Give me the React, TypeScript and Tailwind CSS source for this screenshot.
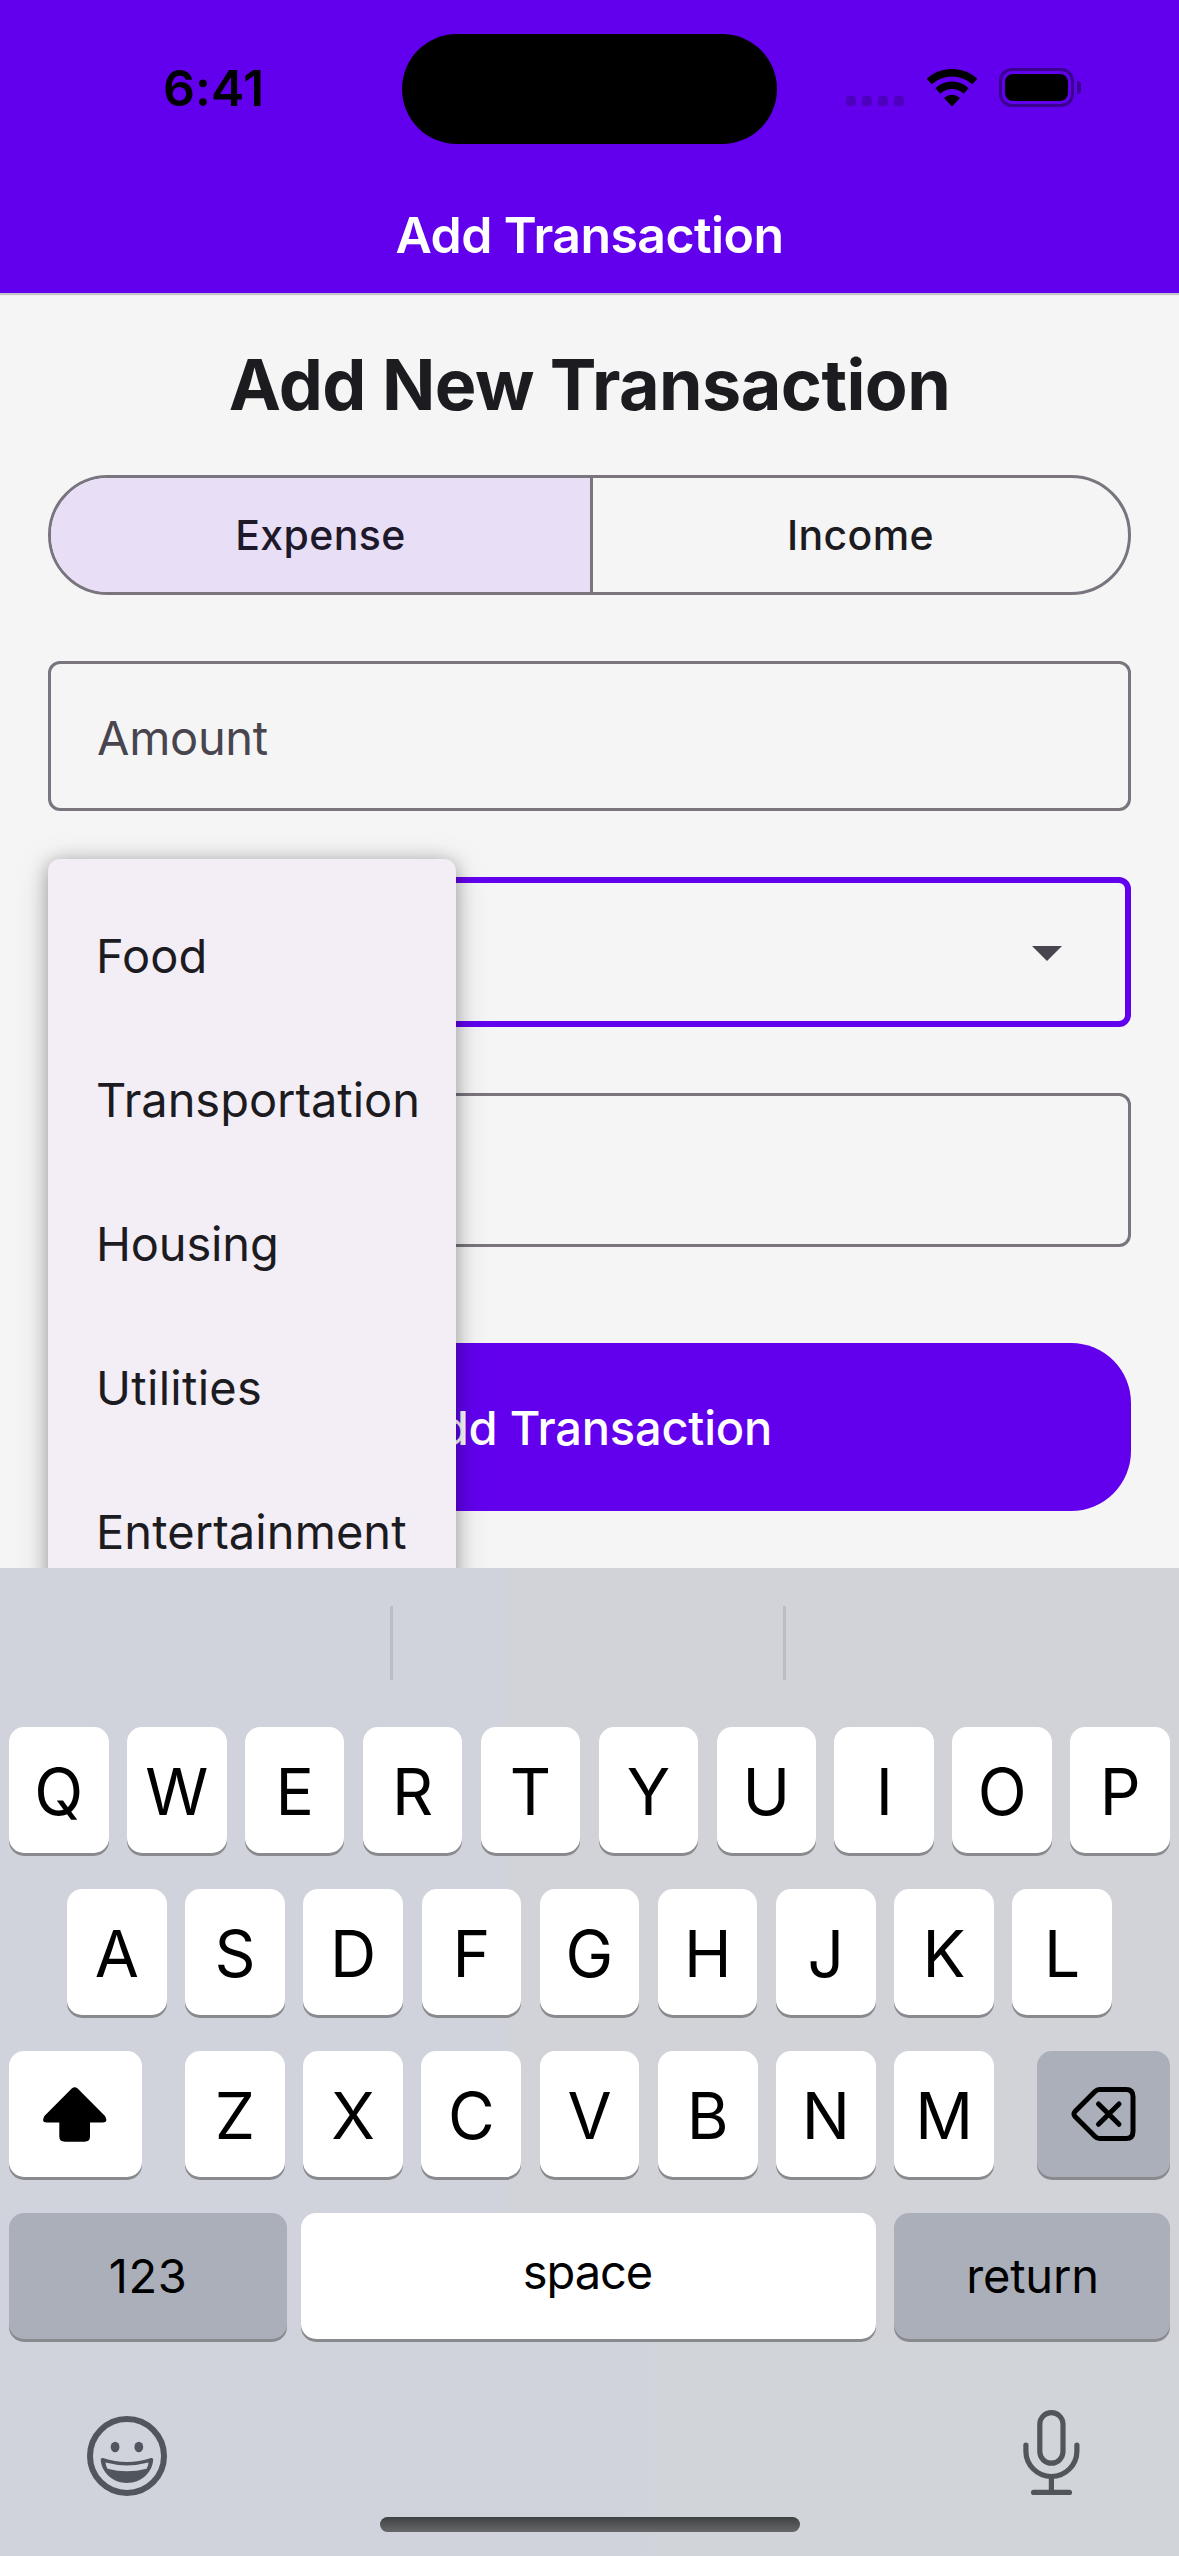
import type { ReactNode } from "react";

const CATEGORIES = [
  { label: "Food", tracking: "tracking-[0.1px]" },
  { label: "Transportation", tracking: "tracking-[-0.04px]" },
  { label: "Housing", tracking: "tracking-[-0.15px]" },
  { label: "Utilities", tracking: "tracking-[0.3px]" },
  { label: "Entertainment", tracking: "tracking-[0.08px]" },
];

function WifiIcon() {
  return (
    <svg width="50" height="38" viewBox="0 0 50 38" fill="none" stroke="#000" strokeWidth="7.5">
      <path d="M2.3 12.6A33.3 33.3 0 0 1 47.7 12.6" />
      <path d="M10.9 21.9A20.7 20.7 0 0 1 39.1 21.9" />
      <path d="M25 36.5L18 29A10.8 10.8 0 0 1 32 29Z" fill="#000" strokeWidth="1.4" strokeLinejoin="round" />
    </svg>
  );
}

function ShiftIcon() {
  return (
    <svg width="64" height="55" viewBox="0 0 64 55" className="mr-[2px] overflow-visible">
      <path d="M29 1.3Q31.7-1 34.4 1.3L62 29Q65.5 35.5 60 35.5H47V49.5Q47 54.7 41.5 54.7H22Q16.3 54.7 16.3 49.5V35.5H3.4Q-2 35.5 1.4 29Z" />
    </svg>
  );
}

function BackspaceIcon() {
  return (
    <svg width="65" height="54" viewBox="0 0 65 54" fill="none" stroke="#000" strokeWidth="5" strokeLinecap="round" strokeLinejoin="round">
      <path d="M28.5 2.5H55Q62 2.5 62 9.5V44.5Q62 51.5 55 51.5H28.5Q26 51.5 24 49.5L4 29.5Q2 27 4 24.5L24 4.5Q26 2.5 28.5 2.5Z" />
      <path d="M27.5 17L48 37.3M48 17L27.5 37.3" />
    </svg>
  );
}

function EmojiIcon() {
  return (
    <svg width="80" height="80" viewBox="0 0 80 80">
      <circle cx="40" cy="40" r="37" fill="none" stroke="#51555e" strokeWidth="6" />
      <ellipse cx="28.1" cy="31" rx="4.4" ry="5.3" fill="#51555e" />
      <ellipse cx="51.8" cy="31" rx="4.4" ry="5.3" fill="#51555e" />
      <path d="M13.7 43.6Q13.7 41.5 16 42Q40 50 64 42Q66.3 41.5 66.2 43.6C65.5 57 54 67 40 67S14.5 57 13.7 43.6Z" fill="#51555e" />
      <path d="M18.5 46.6Q40 52.3 61.5 46.6Q61.3 50 59.5 52.7Q40 57.7 20.5 52.7Q18.8 50 18.5 46.6Z" fill="#d0d3dc" />
    </svg>
  );
}

function MicIcon() {
  return (
    <svg width="57" height="86" viewBox="0 0 57 86" fill="none" stroke="#51565b" strokeWidth="5.2" strokeLinecap="round">
      <rect x="16.8" y="2.6" width="23.2" height="50.6" rx="11.6" />
      <path d="M2.9 35V41A25.5 25.5 0 0 0 53.9 41V35" />
      <path d="M28.4 67V81M10.6 82.4H46.4" />
    </svg>
  );
}

function Key({ children, size, dark }: { children: ReactNode; size: string; dark?: boolean }) {
  return (
    <div
      className={`${size} ${dark ? "bg-[#abafba]" : "bg-white"} flex h-[126px] shrink-0 items-center justify-center rounded-[15px] leading-none text-black shadow-[0_3px_0_#898a8d]`}
    >
      {children}
    </div>
  );
}

function Letters({ row }: { row: string }) {
  return (
    <>
      {row.split("").map((letter) => (
        <Key key={letter} size="w-[99.6px]">
          <span className="pt-[3px] text-[64px]">{letter}</span>
        </Key>
      ))}
    </>
  );
}

function StatusBar() {
  return (
    <div className="flex h-[176px] items-start pt-[33px]">
      <div className="flex h-[109px] w-[402px] items-center pl-[163px] text-[50px] leading-none font-semibold tracking-[0.1px] text-black">
        6:41
      </div>
      <div className="mt-[1px] h-[110px] w-[375px] rounded-full bg-black" />
      <div className="flex h-[111px] pl-[69px]">
        <div className="flex gap-[6px] pt-[63px]">
          {[0, 1, 2, 3].map((dot) => (
            <div key={dot} className="size-[10px] rounded-[3px] bg-black/20" />
          ))}
        </div>
        <div className="pt-[36px] pl-[22.5px]">
          <WifiIcon />
        </div>
        <div className="flex h-[74px] items-end pl-[22.5px]">
          <div className="h-[39px] w-[75px] rounded-[13px] border-[3px] border-black/40 p-[3px]">
            <div className="h-[27px] w-[63px] rounded-[8px] bg-black" />
          </div>
          <div className="mb-[13px] ml-[3px] h-[13px] w-[4px] rounded-r-full bg-black/40" />
        </div>
      </div>
    </div>
  );
}

function CategoryMenu() {
  return (
    <div className="absolute top-[566px] left-[48px] h-[900px] w-[408px] rounded-[12px] bg-[#f3edf6] py-6 shadow-[0_6px_36px_rgba(0,0,0,0.15),0_3px_18px_rgba(0,0,0,0.3)]">
      {CATEGORIES.map(({ label, tracking }) => (
        <div key={label} className={`${tracking} flex h-[144px] items-center pt-[1px] pl-[48px] text-[47px] leading-none text-[#1c1b1f]`}>
          {label}
        </div>
      ))}
    </div>
  );
}

function Keyboard() {
  return (
    <div className="flex h-[988px] flex-col bg-[linear-gradient(to_right,#d0d3dc_505px,#d2d3d8_511px)]">
      <div className="flex h-[159px] shrink-0 pt-[38px]">
        <div className="h-[74px] w-[390px]" />
        <div className="h-[74px] w-[3px] bg-[#bcbdc2]" />
        <div className="h-[74px] w-[390px]" />
        <div className="h-[74px] w-[3px] bg-[#bcbdc2]" />
      </div>
      <div className="flex flex-col gap-[36px] px-[9px]">
        <div className="flex justify-between">
          <Letters row="QWERTYUIOP" />
        </div>
        <div className="flex justify-between px-[58px]">
          <Letters row="ASDFGHJKL" />
        </div>
        <div className="flex justify-between">
          <Key size="w-[133px]">
            <ShiftIcon />
          </Key>
          <div className="flex w-[809px] justify-between">
            <Letters row="ZXCVBNM" />
          </div>
          <Key size="w-[133px]" dark>
            <BackspaceIcon />
          </Key>
        </div>
        <div className="flex text-[47px]">
          <Key size="w-[278px]" dark>
            <span className="pb-px tracking-[0.6px]">123</span>
          </Key>
          <div className="w-[14px]" />
          <Key size="w-[575px]">
            <span className="pr-[2px] pb-[9px] tracking-[-1.07px]">space</span>
          </Key>
          <div className="w-[18px]" />
          <Key size="w-[276px]" dark>
            <span className="pb-px pl-px tracking-[-0.2px]">return</span>
          </Key>
        </div>
      </div>
      <div className="mt-[3px] flex flex-1 flex-col bg-[linear-gradient(to_right,#d0d3dc_620px,#d1d4d9_670px)]">
        <div className="flex h-[154px] items-start justify-between pt-[68px] pr-[99px] pl-[87px]">
          <div className="pt-[6px]">
            <EmojiIcon />
          </div>
          <MicIcon />
        </div>
        <div className="mt-[21px] ml-[380px] h-[15px] w-[420px] rounded-full bg-[linear-gradient(to_bottom,#3e4142,#67676a)]" />
      </div>
    </div>
  );
}

export default function App() {
  return (
    <div className="flex h-[2556px] w-[1179px] flex-col overflow-hidden bg-[#f5f5f5] font-['Inter',sans-serif]">
      <header className="relative z-10 h-[293px] shrink-0 bg-[#6200ee] shadow-[0_2px_1px_rgba(0,0,0,0.2)]">
        <StatusBar />
        <div className="flex h-[117px] items-center justify-center text-[50px] leading-none font-semibold tracking-[-0.57px] text-white">
          Add Transaction
        </div>
      </header>

      <main className="relative flex h-[1275px] shrink-0 flex-col overflow-hidden px-12 pt-12">
        <h1 className="flex h-[87px] shrink-0 items-center justify-center text-[70px] leading-none font-bold tracking-[-0.57px] text-[#1c1b1f]">
          Add New Transaction
        </h1>

        <div className="mt-[47px] flex h-[120px] shrink-0 overflow-hidden rounded-full border-[3px] border-[#79747e] text-[41px] leading-none font-medium tracking-[0.4px]">
          <div className="flex w-[542px] items-center justify-center border-r-[3px] border-[#79747e] bg-[#e8def6] text-[#1d192b]">
            Expense
          </div>
          <div className="flex flex-1 items-center justify-center text-[#1c1b1f]">Income</div>
        </div>

        <div className="mt-[66px] flex h-[150px] shrink-0 items-center rounded-[12px] border-[3px] border-[#79747e] pt-[2px] pl-[46px] text-[47px] leading-none tracking-[-0.3px] text-[#49454f]">
          Amount
        </div>

        <div className="mt-[66px] flex h-[150px] shrink-0 items-center justify-end rounded-[12px] border-[6px] border-[#6200ee] pt-[3px] pr-[63px]">
          <svg width="30" height="15" viewBox="0 0 30 15" fill="#49454f">
            <path d="M0 0H30L15 15Z" />
          </svg>
        </div>

        <div className="mt-[66px] h-[154px] shrink-0 rounded-[12px] border-[3px] border-[#79747e]" />

        <div className="mt-[96px] flex h-[168px] shrink-0 items-center justify-center rounded-[60px] bg-[#6200ee] text-[47px] leading-none font-medium tracking-[-0.21px] text-white">
          Add Transaction
        </div>

        <CategoryMenu />
      </main>

      <Keyboard />
    </div>
  );
}
